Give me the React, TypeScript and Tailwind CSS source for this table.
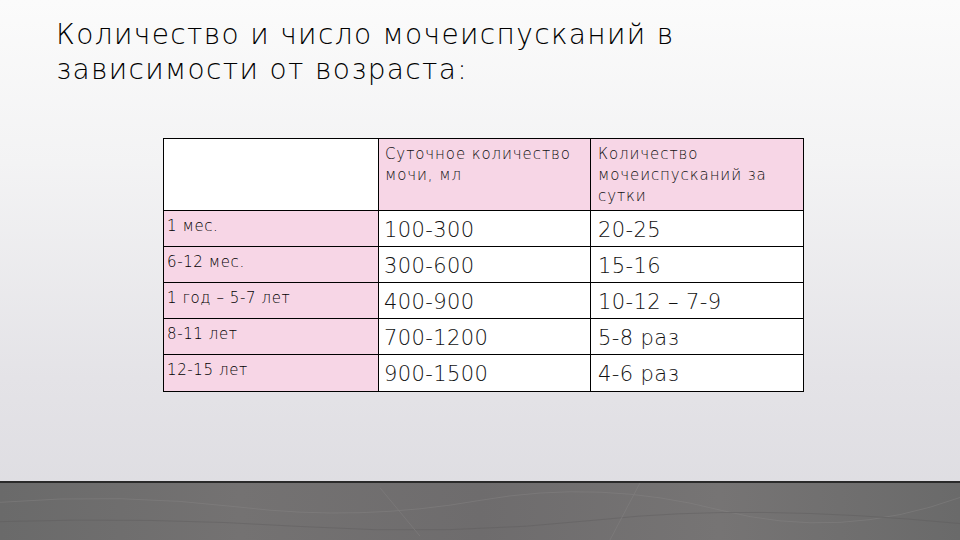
import React from "react";

const rows = [
  ["1 мес.", "100-300", "20-25"],
  ["6-12 мес.", "300-600", "15-16"],
  ["1 год – 5-7 лет", "400-900", "10-12 – 7-9"],
  ["8-11 лет", "700-1200", "5-8 раз"],
  ["12-15 лет", "900-1500", "4-6 раз"],
];

export default function App() {
  return (
    <div
      className="w-[960px] h-[540px] overflow-hidden flex flex-col bg-[linear-gradient(180deg,#fbfbfb_0%,#f3f3f4_30%,#e4e3e7_70%,#dcdbe0_100%)]"
      style={{ fontFamily: '"DejaVu Sans", "Open Sans", sans-serif' }}
    >
      <div className="flex-1 flex flex-col">
        <h1 className="pl-[56px] pt-[17px] text-[28px] leading-[35px] font-extralight text-black tracking-[1.35px]">
          Количество и число мочеиспусканий в
          <br />
          зависимости от возраста:
        </h1>
        <div className="pl-[163px] pt-[51px]">
          <div className="w-[641px] border border-black grid grid-cols-[215px_212px_212px] text-[#111]">
            <div className="h-[72px] bg-white border-r border-b border-black" />
            <div className="h-[72px] bg-[#f7d6e6] border-r border-b border-black px-[6px] pt-[5px] text-[15px] leading-[21px] font-extralight tracking-[0.9px]">
              Суточное количество мочи, мл
            </div>
            <div className="h-[72px] bg-[#f7d6e6] border-b border-black pl-[7px] pr-[14px] pt-[5px] text-[15px] leading-[21px] font-extralight tracking-[0.9px]">
              Количество мочеиспусканий за сутки
            </div>
            {rows.map((r, i) => (
              <React.Fragment key={i}>
                <div
                  className={`h-[36px] bg-[#f7d6e6] border-r border-black px-[3px] pt-[7px] text-[15px] leading-[17px] font-extralight tracking-[0.6px] text-black ${i < rows.length - 1 ? "border-b" : ""}`}
                >
                  {r[0]}
                </div>
                <div
                  className={`h-[36px] bg-white border-r border-black px-[5px] pt-[6px] text-[21px] leading-[26px] font-extralight tracking-[0.4px] ${i < rows.length - 1 ? "border-b" : ""}`}
                >
                  {r[1]}
                </div>
                <div
                  className={`h-[36px] bg-white border-black px-[7px] pt-[6px] text-[21px] leading-[26px] font-extralight tracking-[0.4px] ${i < rows.length - 1 ? "border-b" : ""}`}
                >
                  {r[2]}
                </div>
              </React.Fragment>
            ))}
          </div>
        </div>
      </div>
      <div className="h-[59px] border-t-2 border-[#2a2a2a] bg-[linear-gradient(90deg,#6a6a6a_0%,#747272_25%,#6e6c6d_50%,#767474_75%,#6a6a6a_100%)] relative">
        <svg className="absolute inset-0 w-full h-full opacity-40" viewBox="0 0 960 59" preserveAspectRatio="none">
          <path d="M0 20 Q120 10 240 25 T480 18 T720 28 T960 15" stroke="#8a8888" strokeWidth="1" fill="none" />
          <path d="M0 40 Q150 35 300 45 T600 38 T960 42" stroke="#5c5a5b" strokeWidth="1" fill="none" />
          <path d="M380 5 L420 55 M640 0 L610 59" stroke="#8f8c8c" strokeWidth="0.8" fill="none" />
        </svg>
      </div>
    </div>
  );
}
